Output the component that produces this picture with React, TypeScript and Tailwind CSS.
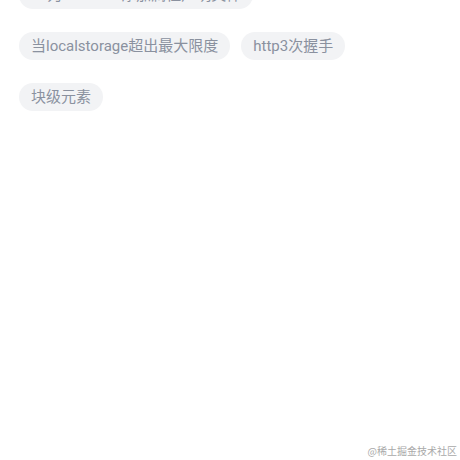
const tags = [
  "ts 为 window 添加属性声明文件",
  "当localstorage超出最大限度",
  "http3次握手",
  "块级元素",
];

export default function App() {
  return (
    <div
      className="relative h-[460px] w-[460px] overflow-hidden bg-white"
      style={{ fontFamily: 'Roboto, "Noto Sans CJK SC", sans-serif' }}
    >
      <div className="-mt-[19px] flex flex-wrap gap-x-[11px] gap-y-[23px] pl-[19px] pr-[20px]">
        {tags.map((t) => (
          <span
            key={t}
            className="flex h-[28px] items-center whitespace-pre rounded-full bg-[#f2f3f5] px-[12px] text-[15px] leading-none text-[#8a919f]"
          >
            {t}
          </span>
        ))}
      </div>
      <div
        className="absolute bottom-[4px] right-[3px] text-[10px] leading-none text-[#a9a9a9]"
        style={{ fontFamily: '"Noto Sans CJK SC", sans-serif' }}
      >
        @稀土掘金技术社区
      </div>
    </div>
  );
}
